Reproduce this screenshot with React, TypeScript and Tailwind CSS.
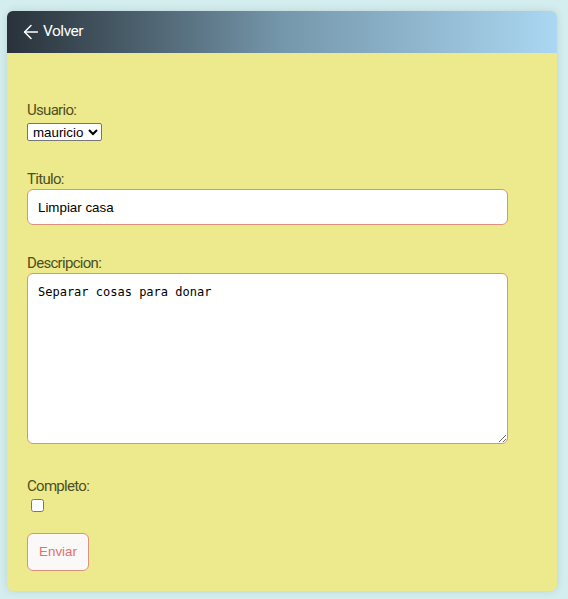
import { ArrowLeft } from "lucide-react";

const labelFont = "font-['Roboto',sans-serif] font-normal tracking-[-0.7px]";

export default function App() {
  return (
    <div className="min-h-[599px] bg-[#d4eef0] pt-[11px] pl-[7px] pr-[11px] pb-[9px]">
      <div className="w-[550px] rounded-[6px] overflow-hidden shadow-[0_0_8px_rgba(0,0,0,0.12)] bg-[#ecea8c]">
        <header className="h-[42px] flex items-center pl-[13px] bg-gradient-to-r from-[#29323a] via-[#7597ab] to-[#abd7f2]">
          <button type="button" className="flex items-center gap-[1px] text-white text-[15.5px] font-['Roboto',sans-serif] tracking-[-0.5px]">
            <ArrowLeft className="w-[22px] h-[22px]" strokeWidth={1.6} />
            <span>Volver</span>
          </button>
        </header>

        <form className="px-[20px] pt-[48px] pb-[20px] text-[#4e4f22]">
          <div className="flex flex-col items-start">
            <label className={`text-[15px] leading-[18px] ${labelFont}`}>Usuario:</label>
            <select
              defaultValue="mauricio"
              className="mt-[4px] h-[18px] w-[75px] border border-[#767676] rounded-[2px] bg-white text-black text-[13.33px] font-['Liberation_Sans',sans-serif] pl-[1px]"
            >
              <option value="mauricio">mauricio</option>
            </select>
          </div>

          <div className="mt-[29px] flex flex-col">
            <label className={`text-[15px] leading-[18px] ${labelFont}`}>Titulo:</label>
            <input
              type="text"
              defaultValue="Limpiar casa"
              className="mt-[1px] w-[481px] h-[36px] rounded-[6px] border border-[#e0917a] bg-white px-[10px] text-[13.33px] text-black font-['Liberation_Sans',sans-serif] outline-none"
            />
          </div>

          <div className="mt-[29px] flex flex-col">
            <label className={`text-[15px] leading-[18px] ${labelFont}`}>Descripcion:</label>
            <textarea
              defaultValue="Separar cosas para donar"
              className="mt-[1px] w-[481px] h-[171px] rounded-[6px] border border-[#e0917a] bg-white px-[10px] py-[10px] text-[12px] leading-[16px] text-black font-['DejaVu_Sans_Mono',monospace] outline-none"
            />
          </div>

          <div className="mt-[33px] flex flex-col items-start">
            <label className={`text-[15px] leading-[18px] ${labelFont}`}>Completo:</label>
            <input type="checkbox" className="mt-[4px] ml-[4px] w-[13px] h-[13px]" />
          </div>

          <button
            type="button"
            className="block mt-[21px] h-[38px] w-[62px] rounded-[6px] border border-[#e0917a] bg-[#fbf8f8] text-[#e07070] text-[13.33px] font-['Liberation_Sans',sans-serif]"
          >
            Enviar
          </button>
        </form>
      </div>
    </div>
  );
}
